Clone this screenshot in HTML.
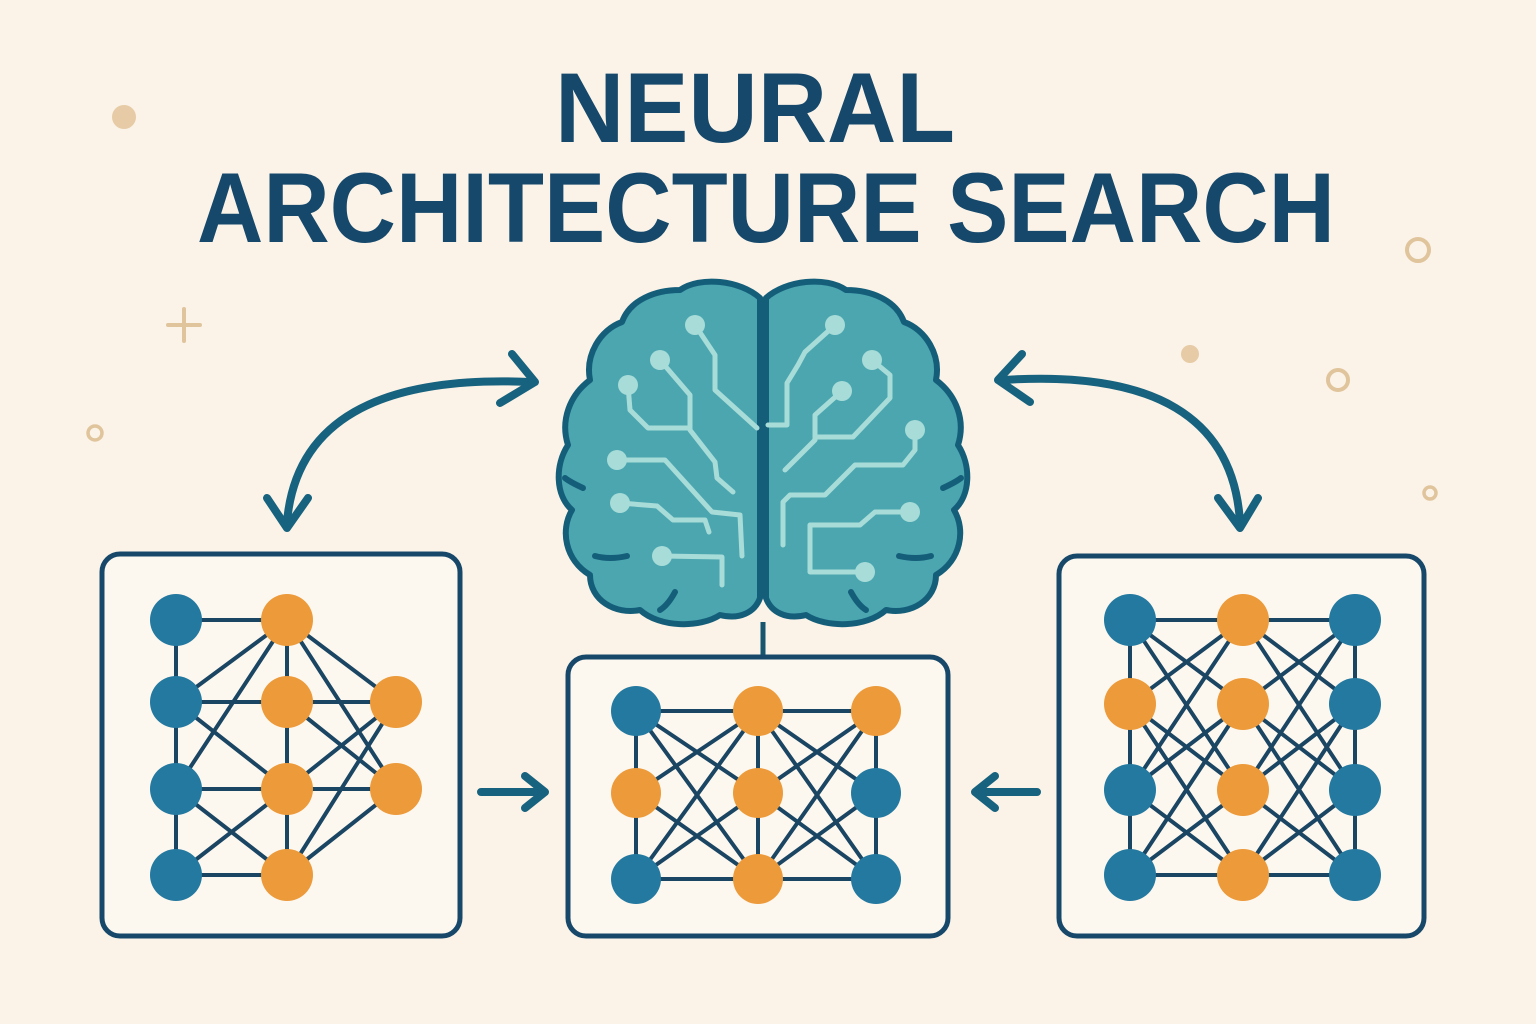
<!DOCTYPE html>
<html><head><meta charset="utf-8"><style>
html,body{margin:0;padding:0;background:#fbf3e8;}
svg{display:block}
</style></head><body>
<svg width="1536" height="1024" viewBox="0 0 1536 1024" xmlns="http://www.w3.org/2000/svg">
<rect width="1536" height="1024" fill="#fbf3e8"/>
<g fill="#e6cba6" stroke="#e0c49c">
<circle cx="124" cy="117" r="12" stroke="none"/>
<circle cx="1190" cy="354" r="9" stroke="none"/>
<circle cx="1418" cy="250" r="11" fill="none" stroke-width="4"/>
<circle cx="1338" cy="380" r="10" fill="none" stroke-width="4"/>
<circle cx="95" cy="433" r="7" fill="none" stroke-width="3.5"/>
<circle cx="1430" cy="493" r="6" fill="none" stroke-width="3.5"/>
<path d="M168 325H200M184 309V341" fill="none" stroke-width="4" stroke-linecap="round"/>
</g>
<g font-family="'Liberation Sans',sans-serif" font-weight="bold" fill="#15486b" font-size="99">
<text x="555" y="142" textLength="400" lengthAdjust="spacingAndGlyphs">NEURAL</text>
<text x="197" y="242" textLength="1138" lengthAdjust="spacingAndGlyphs">ARCHITECTURE SEARCH</text>
</g>
<g fill="none" stroke="#17627e" stroke-width="8" stroke-linecap="round" stroke-linejoin="round">
<path d="M287 522Q300 372 530 382"/>
<path d="M267 498L287 528L308 498"/>
<path d="M512 354L535 382L500 403"/>
<path d="M1003 380Q1230 365 1240 522"/>
<path d="M1022 354L998 380L1030 402"/>
<path d="M1218 498L1240 528L1258 498"/>
<path d="M481 792H543M525 776L545 792L525 808"/>
<path d="M1037 792H977M995 776L975 792L995 808"/>
</g>
<line x1="763" y1="622" x2="763" y2="658" stroke="#17566f" stroke-width="5"/>
<g stroke="#155e7a" stroke-width="6" fill="#4ba6b0" stroke-linejoin="round">
<path d="M760 298C740 280 700 276 680 290C655 290 630 300 622 322C600 330 585 355 590 380C570 395 560 420 568 445C555 465 555 495 572 510C560 530 565 560 590 575C590 600 615 615 640 610C660 628 700 628 720 615C740 620 755 612 760 598Z"/>
<path d="M766 298C786 280 826 276 846 290C871 290 896 300 904 322C926 330 941 355 936 380C956 395 966 420 958 445C971 465 971 495 954 510C966 530 961 560 936 575C936 600 911 615 886 610C866 628 826 628 806 615C786 620 771 612 766 598Z"/>
</g>
<g fill="none" stroke="#155e7a" stroke-width="6" stroke-linecap="round">
<path d="M583 488Q570 482 565 478"/><path d="M627 556Q610 560 595 556"/><path d="M675 592Q668 605 660 610"/>
<path d="M943 488Q956 482 961 478"/><path d="M899 556Q916 560 931 556"/><path d="M851 592Q858 605 866 610"/>
</g>
<g fill="none" stroke="#a8dcd8" stroke-width="5" stroke-linejoin="round" stroke-linecap="round">
<path d="M695 325L715 355L715 390L757 428"/>
<path d="M660 360L690 395L690 430L715 462L717 478L733 492"/>
<path d="M628 385L630 410L648 428L688 428"/>
<path d="M617 460L665 460L712 512L740 515L742 556"/>
<path d="M620 503L657 506L673 520L705 520L709 532"/>
<path d="M662 556L722 557L722 585"/>
<path d="M835 325L805 352L798 365L787 383L787 425L768 425"/>
<path d="M872 360L890 375L890 398L853 437L815 437"/>
<path d="M842 391L815 415L815 440L785 470"/>
<path d="M915 430L915 450L903 465L855 465L825 495L790 495L783 502L783 545"/>
<path d="M910 512L875 512L860 525L810 525L810 572L865 572"/>
</g>
<g fill="#a8dcd8">
<circle cx="695" cy="325" r="10"/><circle cx="660" cy="360" r="10"/><circle cx="628" cy="385" r="10"/>
<circle cx="617" cy="460" r="10"/><circle cx="620" cy="503" r="10"/><circle cx="662" cy="556" r="10"/>
<circle cx="835" cy="325" r="10"/><circle cx="872" cy="360" r="10"/><circle cx="842" cy="391" r="10"/>
<circle cx="915" cy="430" r="10"/><circle cx="910" cy="512" r="10"/><circle cx="865" cy="572" r="10"/>
</g>
<g fill="#fdf8ef" stroke="#17486a" stroke-width="5">
<rect x="102" y="554" width="358" height="382" rx="18"/>
<rect x="568" y="657" width="380" height="279" rx="18"/>
<rect x="1059" y="556" width="365" height="380" rx="18"/>
</g>
<g stroke="#1a4563" stroke-width="4">
<path d="M176 620V875M287 620V875"/>
<path d="M176 620H287M176 702H287M176 789H287M176 875H287"/>
<path d="M176 702L287 620M176 789L287 620M176 702L287 789M176 789L287 875M176 875L287 789"/>
<path d="M287 620L396 702M287 620L396 789M287 702H396M287 702L396 789M287 789L396 702M287 789H396M287 875L396 702M287 875L396 789"/>
</g>
<g stroke="#1a4563" stroke-width="4">
<path d="M636 711V879M758 711V879M876 711V879M636 711H876M636 879H876"/>
<path d="M636 711L758 793M636 711L758 879M636 793L758 711M636 793L758 879M636 879L758 711M636 879L758 793"/>
<path d="M758 711L876 793M758 711L876 879M758 793L876 711M758 793L876 879M758 879L876 711M758 879L876 793"/>
</g>
<g stroke="#1a4563" stroke-width="4">
<path d="M1130 620V875M1355 620V875M1130 620H1355M1130 875H1355"/>
<path d="M1130 620L1243 704M1130 620L1243 790M1130 704L1243 620M1130 704L1243 790M1130 704L1243 875M1130 790L1243 620M1130 790L1243 704M1130 790L1243 875M1130 875L1243 704M1130 875L1243 790"/>
<path d="M1243 620L1355 704M1243 620L1355 790M1243 704L1355 620M1243 704L1355 790M1243 704L1355 875M1243 790L1355 620M1243 790L1355 704M1243 790L1355 875M1243 875L1355 704M1243 875L1355 790"/>
</g>
<g fill="#2479a0">
<circle cx="176" cy="620" r="26"/><circle cx="176" cy="702" r="26"/><circle cx="176" cy="789" r="26"/><circle cx="176" cy="875" r="26"/>
<circle cx="636" cy="711" r="25"/><circle cx="876" cy="793" r="25"/><circle cx="636" cy="879" r="25"/><circle cx="876" cy="879" r="25"/>
<circle cx="1130" cy="620" r="26"/><circle cx="1130" cy="790" r="26"/><circle cx="1130" cy="875" r="26"/>
<circle cx="1355" cy="620" r="26"/><circle cx="1355" cy="704" r="26"/><circle cx="1355" cy="790" r="26"/><circle cx="1355" cy="875" r="26"/>
</g>
<g fill="#ec9a3a">
<circle cx="287" cy="620" r="26"/><circle cx="287" cy="702" r="26"/><circle cx="287" cy="789" r="26"/><circle cx="287" cy="875" r="26"/>
<circle cx="396" cy="702" r="26"/><circle cx="396" cy="789" r="26"/>
<circle cx="758" cy="711" r="25"/><circle cx="876" cy="711" r="25"/><circle cx="636" cy="793" r="25"/><circle cx="758" cy="793" r="25"/><circle cx="758" cy="879" r="25"/>
<circle cx="1130" cy="704" r="26"/>
<circle cx="1243" cy="620" r="26"/><circle cx="1243" cy="704" r="26"/><circle cx="1243" cy="790" r="26"/><circle cx="1243" cy="875" r="26"/>
</g>
</svg>
</body></html>
